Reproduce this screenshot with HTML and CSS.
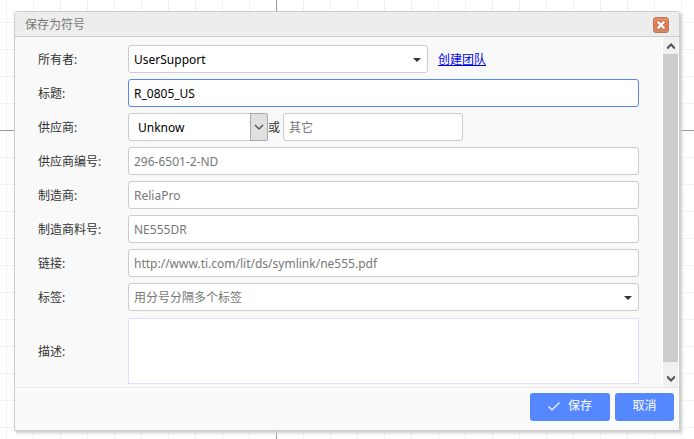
FILE: index.html
```html
<!DOCTYPE html>
<html lang="zh-CN">
<head>
<meta charset="utf-8">
<title>保存为符号</title>
<link rel="stylesheet" href="styles.css">
</head>
<body>
<main class="canvas">
<form class="dialog" role="dialog" aria-labelledby="dialog-title">
  <header class="dialog-header">
    <h1 class="dialog-title" id="dialog-title">保存为符号</h1>
    <button class="close" type="button" aria-label="关闭">
      <svg width="16" height="16" viewBox="0 0 16 16">
        <defs><linearGradient id="close-fill" x1="0" y1="0" x2="0" y2="1"><stop offset="0" stop-color="#e49467"/><stop offset=".5" stop-color="#e77a51"/><stop offset="1" stop-color="#cd8b66"/></linearGradient></defs>
        <rect x=".5" y=".5" width="15" height="15" rx="2.5" fill="url(#close-fill)" stroke="#b87560"/>
        <path d="M5.500 5.500l5 5M10.500 5.500l-5 5" stroke="#c4694a" stroke-width="4" stroke-linecap="square"/>
        <path d="M5.500 5.500l5 5M10.500 5.500l-5 5" stroke="#fff" stroke-width="2.400" stroke-linecap="square"/>
      </svg>
    </button>
  </header>
  <div class="dialog-body">
    <div class="fields">
      <div class="row">
        <label class="label" for="owner">所有者:</label>
        <div class="control owner">
          <select class="field" id="owner"><option>UserSupport</option></select>
          <svg class="caret" width="8" height="4" viewBox="0 0 8 4"><path d="M0 0h8L4 4z" fill="#333"/></svg>
        </div>
        <a class="link" href="#">创建团队</a>
      </div>
      <div class="row">
        <label class="label" for="title">标题:</label>
        <input class="field active" id="title" type="text" value="R_0805_US">
      </div>
      <div class="row">
        <label class="label" for="supplier">供应商:</label>
        <div class="control supplier">
          <select class="field" id="supplier"><option>Unknow</option></select>
          <span class="drop"><svg width="10" height="6" viewBox="0 0 10 6"><path d="M1 1l4 4 4-4" fill="none" stroke="#444" stroke-width="1.2"/></svg></span>
        </div>
        <label class="or" for="other">或</label>
        <input class="field other" id="other" type="text" placeholder="其它">
      </div>
      <div class="row">
        <label class="label" for="supplier-part">供应商编号:</label>
        <input class="field" id="supplier-part" type="text" placeholder="296-6501-2-ND">
      </div>
      <div class="row">
        <label class="label" for="maker">制造商:</label>
        <input class="field" id="maker" type="text" placeholder="ReliaPro">
      </div>
      <div class="row">
        <label class="label" for="maker-part">制造商料号:</label>
        <input class="field" id="maker-part" type="text" placeholder="NE555DR">
      </div>
      <div class="row">
        <label class="label" for="url">链接:</label>
        <input class="field" id="url" type="text" placeholder="http://www.ti.com/lit/ds/symlink/ne555.pdf">
      </div>
      <div class="row">
        <label class="label" for="tags">标签:</label>
        <div class="control">
          <input class="field" id="tags" type="text" placeholder="用分号分隔多个标签">
          <svg class="caret" width="8" height="4" viewBox="0 0 8 4"><path d="M0 0h8L4 4z" fill="#333"/></svg>
        </div>
      </div>
      <div class="row row-description">
        <label class="label" for="description">描述:</label>
        <textarea class="description" id="description"></textarea>
      </div>
    </div>
    <div class="scrollbar">
      <button class="scroll-up" type="button" aria-label="向上滚动"><svg width="8" height="6" viewBox="0 0 8 6"><path d="M0 4l4-4 4 4v2H7L4 3 1 6H0z" fill="#555"/></svg></button>
      <div class="thumb"></div>
      <button class="scroll-down" type="button" aria-label="向下滚动"><svg width="8" height="6" viewBox="0 0 8 6"><path d="M0 2l4 4 4-4V0H7L4 3 1 0H0z" fill="#555"/></svg></button>
    </div>
  </div>
  <footer class="dialog-footer">
    <button class="button save" type="submit"><svg width="12" height="9" viewBox="0 0 12 9"><path d="M.5 4.5L4 8 11.500 .5" fill="none" stroke="#fff" stroke-width="1.1"/></svg>保存</button>
    <button class="button cancel" type="button">取消</button>
  </footer>
</form>
</main>
</body>
</html>
```
FILE: styles.css
```css
* { box-sizing: border-box; }

body {
  margin: 0;
  font: 12px/16px "Noto Sans", "Noto Sans CJK SC", sans-serif;
  color: #333;
}

button, input, select, textarea { font: inherit; margin: 0; }
svg { display: block; }

/* Drawing sheet: light grid, with the two origin axes on top */
.canvas {
  min-height: 100vh;
  padding: 11px 14px 8px;
  background-color: #fff;
  background-image:
    linear-gradient(#999, #999),
    linear-gradient(#999, #999),
    linear-gradient(to right, #f1f1f1 1px, transparent 1px),
    linear-gradient(#f1f1f1 1px, transparent 1px);
  background-size: 1px 100%, 100% 1px, 27px 27px, 27px 27px;
  background-position: 276px 0, 0 130px, 6px 0, 0 22px;
  background-repeat: no-repeat, no-repeat, repeat, repeat;
}

.dialog {
  border: 1px solid #ccc;
  border-radius: 3px 3px 0 0;
  background: #f9f9f9;
  box-shadow: 2px 2px 3px #ccc;
}

.dialog-header {
  display: flex;
  align-items: center;
  justify-content: space-between;
  height: 25px;
  padding: 2px 10px 0;
  border-bottom: 1px solid #ccc;
  background: #ededed;
}

.dialog-title { margin: 0; font-size: 12px; font-weight: 400; color: #777; }
.close { padding: 0; border: 0; background: none; }

.dialog-body { display: flex; }

.fields {
  flex: 1;
  min-width: 0;
  display: flex;
  flex-direction: column;
  gap: 6px;
  padding: 8px 23px 3px;
}

.row { display: flex; align-items: center; min-height: 28px; }
.row-description { padding-top: 1px; }
.label, .link, .or { padding-top: 2px; }
.label { flex: none; width: 90px; }
.control { position: relative; display: flex; flex: 1; min-width: 0; }

.field {
  flex: 1;
  min-width: 0;
  width: 100%;
  height: 28px;
  padding: 0 5px;
  border: 1px solid #ccc;
  border-radius: 3px;
  background: #fff;
  color: #000;
  outline: 0;
  appearance: none;
}

select.field { padding-top: 2px; }
.field::placeholder { color: #777; opacity: 1; }
.active { border-color: #5588ee; }

.owner { flex: 0 1 300px; }
.caret { position: absolute; right: 7px; top: 13px; pointer-events: none; }
.link { margin-left: 10px; color: #00e; white-space: nowrap; }

.supplier { flex: 0 1 140px; }
.supplier .field { padding-left: 9px; }
.drop {
  position: absolute;
  top: 0;
  right: 0;
  bottom: 0;
  width: 18px;
  display: grid;
  place-items: center;
  border: 1px solid #aaa;
  border-radius: 0 2px 2px 0;
  background: #e0e0e0;
  pointer-events: none;
}
.or { width: 15px; }
.other { flex: 0 1 180px; }

.description {
  flex: 1;
  min-width: 0;
  height: 66px;
  padding: 5px;
  border: 1px solid #ddf;
  background: #fff;
  outline: 0;
  resize: none;
}

.scrollbar {
  flex: none;
  width: 17px;
  display: flex;
  flex-direction: column;
  border: solid #fff;
  border-width: 0 1px;
  background: #f0f0f0;
}
.thumb { flex: 1; background: #ccc; }
.scroll-up, .scroll-down {
  display: grid;
  place-items: center;
  padding: 0;
  border: 0;
  background: #f0f0f0;
}
.scroll-up { height: 17px; }
.scroll-down { height: 25px; padding-top: 8px; }

.dialog-footer {
  display: flex;
  justify-content: flex-end;
  gap: 5px;
  padding: 5px 5px 9px;
  border-top: 1px solid #eaeaea;
  background: #fafafa;
}

.button {
  display: flex;
  align-items: center;
  justify-content: center;
  gap: 8px;
  height: 28px;
  padding: 0 0 2px;
  border: 0;
  border-radius: 3px;
  background: #58f;
  color: #fff;
}
.save { width: 80px; }
.cancel { width: 59px; }
```
